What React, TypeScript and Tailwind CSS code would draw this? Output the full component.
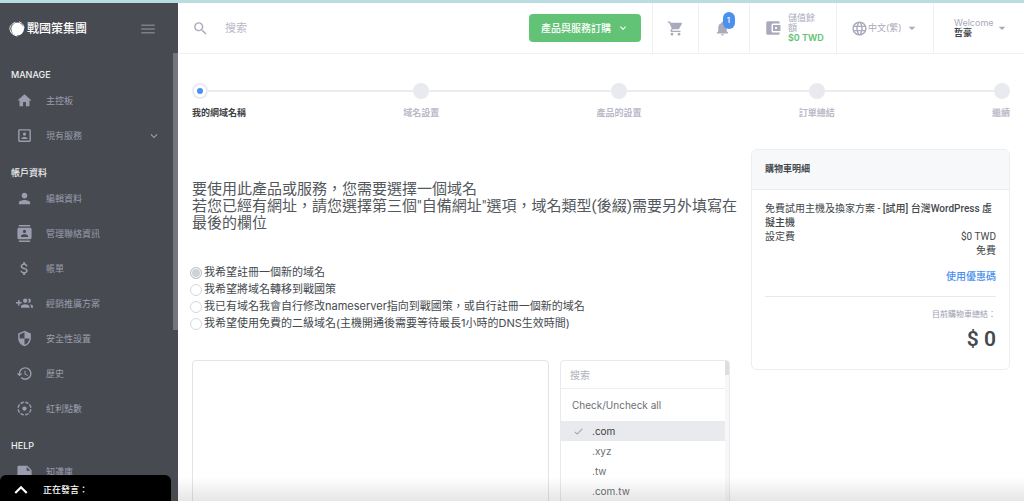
import type { ComponentType } from "react"
import {
  MdAccountBalanceWallet,
  MdArrowDropDown,
  MdAttachMoney,
  MdCheck,
  MdContacts,
  MdExpandLess,
  MdExpandMore,
  MdFilterTiltShift,
  MdHistory,
  MdHome,
  MdLanguage,
  MdMenu,
  MdNote,
  MdNotifications,
  MdPerson,
  MdPortrait,
  MdSearch,
  MdSecurity,
  MdShoppingCart,
} from "react-icons/md"

type Icon = ComponentType<{ className?: string }>

type NavItem = { label: string; icon: Icon; expandable?: boolean }

// Plus sign on the left, unlike MdGroupAdd
function GroupAddIcon({ className }: { className?: string }) {
  return (
    <svg viewBox="0 0 24 24" fill="currentColor" className={className}>
      <path d="M8 10H5V7H3v3H0v2h3v3h2v-3h3v-2zm10 1c1.66 0 2.99-1.34 2.99-3S19.66 5 18 5c-.32 0-.63.05-.91.14.57.81.9 1.79.9 2.86s-.34 2.04-.9 2.86c.28.09.59.14.91.14zm-5 0c1.66 0 2.99-1.34 2.99-3S14.66 5 13 5c-1.66 0-3 1.34-3 3s1.34 3 3 3zm6.62 2.16c.83.73 1.38 1.66 1.38 2.84v2h3v-2c0-1.54-2.37-2.49-4.38-2.84zM13 13c-2 0-6 1-6 3v2h12v-2c0-2-4-3-6-3z" />
    </svg>
  )
}

const NAV: { title: string; items: NavItem[] }[] = [
  {
    title: "MANAGE",
    items: [
      { label: "主控板", icon: MdHome },
      { label: "現有服務", icon: MdPortrait, expandable: true },
    ],
  },
  {
    title: "帳戶資料",
    items: [
      { label: "編輯資料", icon: MdPerson },
      { label: "管理聯絡資訊", icon: MdContacts },
      { label: "帳單", icon: MdAttachMoney },
      { label: "經銷推廣方案", icon: GroupAddIcon },
      { label: "安全性設置", icon: MdSecurity },
      { label: "歷史", icon: MdHistory },
      { label: "紅利點數", icon: MdFilterTiltShift },
    ],
  },
  {
    title: "HELP",
    items: [{ label: "知識庫", icon: MdNote }],
  },
]

const STEPS = ["我的網域名稱", "域名設置", "產品的設置", "訂單總結", "繼續"]

const OPTIONS = [
  "我希望註冊一個新的域名",
  "我希望將域名轉移到戰國策",
  "我已有域名我會自行修改nameserver指向到戰國策，或自行註冊一個新的域名",
  "我希望使用免費的二級域名(主機開通後需要等待最長1小時的DNS生效時間)",
]

const TLDS = [".com", ".xyz", ".tw", ".com.tw"]

function Logo() {
  return (
    <a href="#" className="flex items-center gap-0.5 text-white">
      <svg viewBox="0 0 32 32" className="size-4">
        <circle cx="17" cy="16" r="13" fill="currentColor" />
        <path
          d="M12 3C5 6 1 11 2 17c1 7 7 12 14 13M9 8c-4 5-4 11 1 16M21 2c5 2 9 6 9 12"
          fill="none"
          stroke="currentColor"
          strokeWidth="2"
          strokeLinecap="round"
        />
        <path d="M10 5c-5 4-7 9-5 15M22 4c3 1 5 3 6 6" fill="none" stroke="#474a50" strokeWidth="1" />
      </svg>
      <span className="text-[12px] leading-4 font-medium">戰國策集團</span>
    </a>
  )
}

function Sidebar() {
  return (
    <aside className="relative flex w-[178px] shrink-0 flex-col overflow-hidden bg-[#474a50]">
      <div className="flex h-[50px] shrink-0 items-center justify-between pt-0.5 pr-[21px] pl-[9px]">
        <Logo />
        <button type="button" aria-label="Menu" className="text-[#7d7f8a]">
          <MdMenu className="size-[18px]" />
        </button>
      </div>
      <nav className="relative min-h-0 flex-1 overflow-hidden pt-0.5">
        {NAV.map((group) => (
          <section key={group.title}>
            <h2 className="pt-3 pl-[11px] text-[9px] leading-4 font-medium text-[#f0f0f3]">
              {group.title}
            </h2>
            <ul>
              {group.items.map(({ label, icon: ItemIcon, expandable }) => (
                <li key={label}>
                  <a href="#" className="flex h-[35px] items-center pr-[17px] pl-4 text-[9px] text-[#9b9dae]">
                    <ItemIcon className="mr-[13px] size-[17px]" />
                    <span className="flex-1">{label}</span>
                    {expandable && <MdExpandMore className="size-3.5" />}
                  </a>
                </li>
              ))}
            </ul>
          </section>
        ))}
        <span className="absolute top-0 right-0 h-[277px] w-[5px] bg-[#74767f]" />
      </nav>
      <button
        type="button"
        className="absolute bottom-0 left-0 flex h-[26px] w-[171px] items-center gap-[9px] rounded-t-md bg-black pt-1 pl-2 text-[9px] font-medium text-white"
      >
        <MdExpandLess className="size-[26px]" />
        正在發言：
      </button>
    </aside>
  )
}

function Topbar() {
  return (
    <header className="flex h-[51px] shrink-0 items-stretch border-b border-[#f0f0f3] text-[9px] text-[#a9aabb]">
      <label className="flex min-w-0 flex-1 items-center gap-4 pl-3.5">
        <MdSearch className="size-[17px] shrink-0" />
        <input
          type="search"
          aria-label="搜索"
          placeholder="搜索"
          className="w-full min-w-0 text-[11px] outline-none placeholder:text-[#b9bac8]"
        />
      </label>
      <div className="flex items-center pr-[11px]">
        <button
          type="button"
          className="flex h-7 items-center gap-1.5 rounded bg-[#62c376] px-3 text-[10px] font-medium text-white"
        >
          產品與服務訂購
          <MdExpandMore className="size-3" />
        </button>
      </div>
      <a href="#" aria-label="Cart" className="flex w-[46px] items-center justify-center border-l border-[#f0f0f3]">
        <MdShoppingCart className="size-[17px]" />
      </a>
      <a href="#" aria-label="Notifications" className="flex w-[51px] items-center justify-center border-l border-[#f0f0f3] pr-1">
        <span className="relative">
          <MdNotifications className="size-[17px]" />
          <span className="absolute -top-2 left-[9px] flex h-[17px] w-3 items-center justify-center rounded-md bg-[#4a90ee] text-[8px] font-medium text-white">
            1
          </span>
        </span>
      </a>
      <a href="#" className="flex w-[87px] items-center gap-1.5 border-l border-[#f0f0f3] pl-3.5 leading-[10px]">
        <MdAccountBalanceWallet className="size-[18px]" />
        <span className="w-8">
          儲值餘額
          <strong className="block font-semibold whitespace-nowrap text-[#5dc271]">$0 TWD</strong>
        </span>
      </a>
      <button type="button" className="flex w-[97px] items-center justify-start border-l border-[#f0f0f3] pl-3.5">
        <MdLanguage className="size-[17px]" />
        中文(繁)
        <MdArrowDropDown className="ml-0.5 size-4" />
      </button>
      <button type="button" className="flex w-[91px] items-center border-l border-[#f0f0f3] pl-5 text-left leading-[10px]">
        <span>
          Welcome
          <strong className="block font-bold text-[#3d4145]">哲豪</strong>
        </span>
        <MdArrowDropDown className="size-4" />
      </button>
    </header>
  )
}

function Steps() {
  return (
    <div className="relative">
      <span className="absolute inset-x-2 top-[7px] h-0.5 bg-[#ededf1]" />
      <ol className="relative flex justify-between text-[9px] leading-3 font-bold">
        {STEPS.map((step, i) => (
          <li
            key={step}
            className="flex flex-col items-center gap-2 text-[#b9bac8] first:items-start first:text-[#3d4145] last:items-end"
          >
            {i === 0 ? (
              <span className="flex size-4 items-center justify-center rounded-full border-2 border-[#e9ebf3] bg-white">
                <span className="size-1.5 rounded-full bg-[#4a90ee]" />
              </span>
            ) : (
              <span className="size-4 rounded-full bg-[#e9eaef]" />
            )}
            {step}
          </li>
        ))}
      </ol>
    </div>
  )
}

function DomainList() {
  return (
    <div className="relative h-[220px] w-[170px] shrink-0 overflow-hidden rounded border border-[#e8e9ee] pr-1 text-[10px] text-[#6b7075]">
      <input
        type="search"
        aria-label="搜索"
        placeholder="搜索"
        className="block h-7 w-full border-b border-[#ededf1] px-[9px] outline-none placeholder:text-[#b0b1c0]"
      />
      <button type="button" className="block h-8 w-full px-[11px] text-left">
        Check/Uncheck all
      </button>
      <ul>
        {TLDS.map((tld) => (
          <li key={tld}>
            <label className="flex h-5 items-center gap-2 px-3 has-checked:bg-[#e9eaee] has-checked:text-[#3d4145]">
              <input type="checkbox" defaultChecked={tld === ".com"} className="peer sr-only" />
              <MdCheck className="invisible size-[11px] text-[#9a9da3] peer-checked:visible" />
              {tld}
            </label>
          </li>
        ))}
      </ul>
      <span className="absolute inset-y-0 right-0 w-1 bg-black/3" />
      <span className="absolute top-0 right-0 h-3.5 w-1 bg-[#dedede]" />
    </div>
  )
}

function DomainForm() {
  return (
    <form className="min-w-0 flex-1">
      <h1 className="mt-8 font-['Roboto','Noto_Sans_CJK_TC',sans-serif] text-[15px] leading-[17px] text-[#53585c]">
        要使用此產品或服務，您需要選擇一個域名
        <br />
        若您已經有網址，請您選擇第三個"自備網址"選項，域名類型(後綴)需要另外填寫在最後的欄位
      </h1>
      <fieldset className="mt-8 -ml-0.5 text-[11px] leading-[17px] text-[#44494d]">
        {OPTIONS.map((option, i) => (
          <label key={option} className="flex items-center gap-0.5">
            <input
              type="radio"
              name="domain"
              defaultChecked={i === 0}
              className="size-3 shrink-0 appearance-none rounded-full border border-[#d5d9dd] bg-white checked:border-[#b9c0c8] checked:bg-[#ccd2d5] checked:inset-ring checked:inset-ring-white"
            />
            {option}
          </label>
        ))}
      </fieldset>
      <div className="mt-7 mr-[13px] flex items-start gap-[11px]">
        <textarea
          aria-label="域名"
          className="h-[220px] min-w-0 flex-1 resize-none rounded border border-[#e3e4e8] p-2 text-[11px] outline-none"
        />
        <DomainList />
      </div>
    </form>
  )
}

function CartSummary() {
  return (
    <section className="w-[259px] shrink-0 self-start overflow-hidden rounded-md border border-[#ededf1] font-['Roboto','Noto_Sans_CJK_TC',sans-serif] text-[10px] text-[#44494d]">
      <h2 className="border-b border-[#ededf1] bg-[#f7f8fa] px-[13px] py-3 text-[9px] leading-[15px] font-bold">
        購物車明細
      </h2>
      <div className="px-[13px] pt-3 pb-4 text-right leading-[14px]">
        <p className="text-left">
          免費試用主機及換家方案 - <strong className="font-medium">[試用] 台灣WordPress 虛擬主機</strong>
        </p>
        <p className="flex justify-between">
          <span>設定費</span>
          <span>$0 TWD</span>
        </p>
        <p>免費</p>
        <a href="#" className="mt-3 block font-medium text-[#4a90ee]">
          使用優惠碼
        </a>
        <hr className="mt-3 border-[#e8e9ed]" />
        <p className="mt-3 text-[8px] leading-3 text-[#9b9dae]">目前購物車總結：</p>
        <p className="mt-1 text-[21px] leading-7 font-semibold">$ 0</p>
      </div>
    </section>
  )
}

export default function App() {
  return (
    <div className="flex h-screen flex-col overflow-hidden border-t-[3px] border-[#b9dce1] bg-white font-['Inter','Noto_Sans_CJK_TC',sans-serif]">
      <div className="flex min-h-0 flex-1">
        <Sidebar />
        <div className="relative flex min-w-0 flex-1 flex-col overflow-hidden">
          <Topbar />
          <main className="min-h-0 flex-1 overflow-hidden px-3.5 pt-[29px]">
            <Steps />
            <div className="mt-[30px] flex gap-2">
              <DomainForm />
              <CartSummary />
            </div>
          </main>
          <span className="pointer-events-none absolute inset-x-0 bottom-0 h-6 bg-linear-to-b from-transparent to-black/10" />
        </div>
      </div>
    </div>
  )
}
